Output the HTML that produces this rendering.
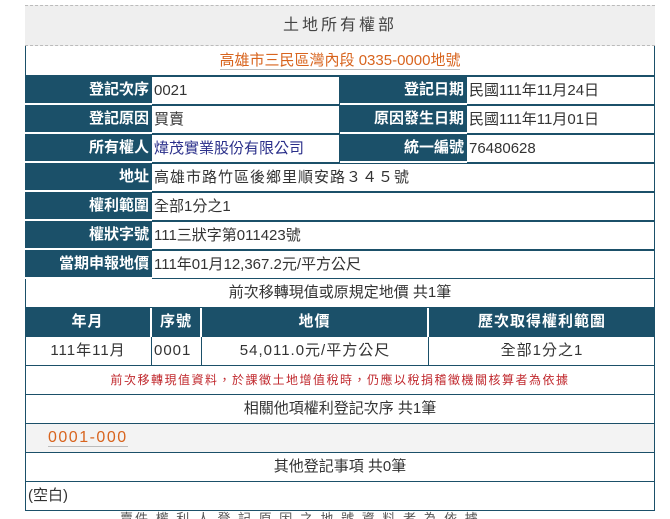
<!DOCTYPE html><html><head><meta charset="utf-8"><style>
html,body{margin:0;background:#fff;font-family:"Liberation Sans","Noto Sans CJK TC",sans-serif;font-size:15px;color:#333;width:670px;height:519px;overflow:hidden;position:relative}
.a{position:absolute;box-sizing:border-box;line-height:28px;white-space:nowrap}
.l{background:#1b5069;color:#fff;font-weight:bold;text-align:right;padding-right:3px;border-bottom:2px solid #fff}
.v{border:1px solid #1b5069;border-left:none;padding-left:2px}
.r{left:25px;width:630px;border:1px solid #1b5069;border-top:none;text-align:center;height:29px}
.h{background:#1b5069;color:#fff;font-weight:bold;text-align:center;letter-spacing:1px;height:29px;border-right:2px solid #fff}
.d{border-right:1px solid #1b5069;text-align:center;height:29px;letter-spacing:1px}
</style></head><body>
<div class="a" style="left:25px;top:5px;width:630px;height:41px;background:#efefef;border-top:1px dashed #bbb;border-bottom:1px dashed #bbb;text-align:center;line-height:40px;font-size:16px;letter-spacing:3px;color:#444">土地所有權部</div>
<div class="a" style="left:25px;top:46px;width:630px;height:30px;border:1px solid #1b5069;border-top:none;text-align:center;color:#d8641e;line-height:30px"><span style="border-bottom:1px solid #bbb">高雄市三民區灣內段 0335-0000地號</span></div>

<div class="a l" style="left:25px;top:76px;width:127px;height:29px">登記次序</div><div class="a v" style="left:152px;top:76px;width:188px;height:29px">0021</div>
<div class="a l" style="left:340px;top:76px;width:127px;height:29px">登記日期</div><div class="a v" style="left:467px;top:76px;width:188px;height:29px">民國111年11月24日</div>
<div class="a l" style="left:25px;top:105px;width:127px;height:29px">登記原因</div><div class="a v" style="left:152px;top:105px;width:188px;height:29px">買賣</div>
<div class="a l" style="left:340px;top:105px;width:127px;height:29px">原因發生日期</div><div class="a v" style="left:467px;top:105px;width:188px;height:29px">民國111年11月01日</div>
<div class="a l" style="left:25px;top:134px;width:127px;height:29px">所有權人</div><div class="a v" style="left:152px;top:134px;width:188px;height:29px;color:#2a2f8a">煒茂實業股份有限公司</div>
<div class="a l" style="left:340px;top:134px;width:127px;height:29px">統一編號</div><div class="a v" style="left:467px;top:134px;width:188px;height:29px">76480628</div>
<div class="a l" style="left:25px;top:163px;width:127px;height:29px">地址</div><div class="a v" style="left:152px;top:163px;width:503px;height:29px;letter-spacing:1px">高雄市路竹區後鄉里順安路３４５號</div>
<div class="a l" style="left:25px;top:192px;width:127px;height:29px">權利範圍</div><div class="a v" style="left:152px;top:192px;width:503px;height:29px">全部1分之1</div>
<div class="a l" style="left:25px;top:221px;width:127px;height:29px">權狀字號</div><div class="a v" style="left:152px;top:221px;width:503px;height:29px">111三狀字第011423號</div>
<div class="a l" style="left:25px;top:250px;width:127px;height:29px">當期申報地價</div><div class="a v" style="left:152px;top:250px;width:503px;height:29px">111年01月12,367.2元/平方公尺</div>

<div class="a r" style="top:279px">前次移轉現值或原規定地價 共1筆</div>
<div class="a h" style="left:25px;top:308px;width:127px">年月</div>
<div class="a h" style="left:152px;top:308px;width:50px">序號</div>
<div class="a h" style="left:202px;top:308px;width:227px">地價</div>
<div class="a h" style="left:429px;top:308px;width:226px;border-right:none">歷次取得權利範圍</div>
<div class="a r" style="top:337px"></div>
<div class="a d" style="left:25px;top:337px;width:127px">111年11月</div>
<div class="a d" style="left:152px;top:337px;width:50px;text-align:left;padding-left:2px">0001</div>
<div class="a d" style="left:202px;top:337px;width:227px">54,011.0元/平方公尺</div>
<div class="a d" style="left:429px;top:337px;width:226px;border-right:none">全部1分之1</div>
<div class="a r" style="top:366px;color:#c0282d;font-size:12px;letter-spacing:1.5px">前次移轉現值資料，於課徵土地增值稅時，仍應以稅捐稽徵機關核算者為依據</div>
<div class="a r" style="top:395px">相關他項權利登記次序 共1筆</div>
<div class="a r" style="top:424px;background:#f3f3f3;text-align:left;padding-left:22px;color:#d8641e;letter-spacing:1.5px;font-size:16px"><span style="border-bottom:1px solid #bbb">0001-000</span></div>
<div class="a r" style="top:453px">其他登記事項 共0筆</div>
<div class="a r" style="top:482px;text-align:left;padding-left:2px">(空白)</div>
<div class="a" style="left:120px;top:505px;font-size:13px;color:#555;letter-spacing:2px">賣件 權 利 人 登 記 原 因 之 地 號 資 料 者 為 依 據</div>
</body></html>
